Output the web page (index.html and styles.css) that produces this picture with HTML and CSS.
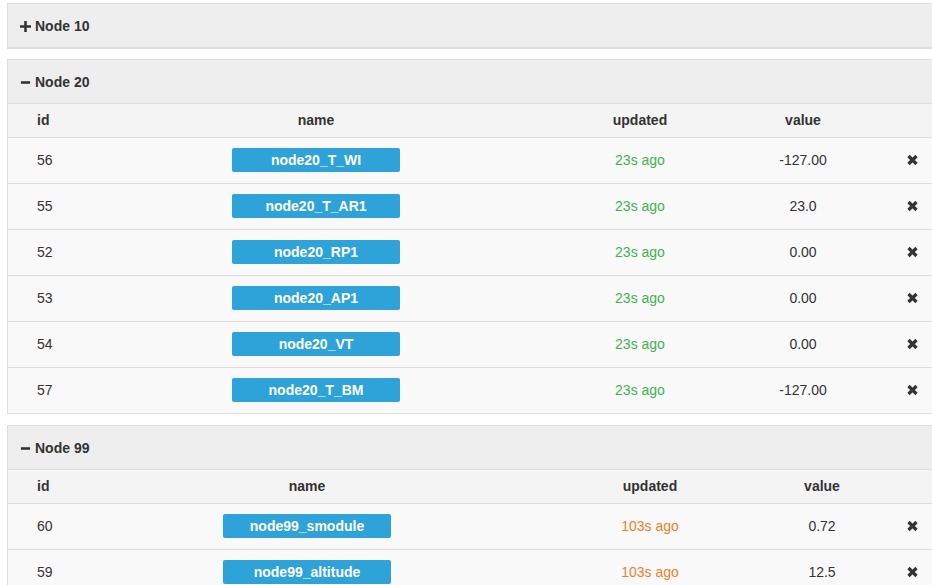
FILE: index.html
```html
<!DOCTYPE html>
<html>
<head>
<meta charset="utf-8">
<title>Nodes</title>
<link rel="stylesheet" href="styles.css">
</head>
<body>
<div class="page">

  <section class="panel">
    <div class="panel-heading">
      <svg class="toggle" viewBox="0 0 12 12" width="12" height="12"><path d="M0 6H12M6 0V12" stroke="#333" stroke-width="2.8"/></svg>
      <span>Node 10</span>
    </div>
  </section>

  <section class="panel panel-open">
    <div class="panel-heading">
      <svg class="toggle" viewBox="0 0 12 12" width="12" height="12"><path d="M1 6H11" stroke="#333" stroke-width="2.8"/></svg>
      <span>Node 20</span>
    </div>
    <table class="sensors t20">
      <colgroup><col class="c-id"><col class="c-name"><col class="c-upd"><col class="c-val"><col class="c-del"><col></colgroup>
      <thead>
        <tr><th class="id">id</th><th>name</th><th>updated</th><th>value</th><th></th><th></th></tr>
      </thead>
      <tbody>
        <tr><td class="id">56</td><td><span class="btn">node20_T_WI</span></td><td class="fresh">23s ago</td><td>-127.00</td><td><svg class="del" viewBox="0 0 12 12" width="12" height="12"><path d="M2 2L10 10M10 2L2 10" stroke="#333" stroke-width="3.2"/></svg></td><td></td></tr>
        <tr><td class="id">55</td><td><span class="btn">node20_T_AR1</span></td><td class="fresh">23s ago</td><td>23.0</td><td><svg class="del" viewBox="0 0 12 12" width="12" height="12"><path d="M2 2L10 10M10 2L2 10" stroke="#333" stroke-width="3.2"/></svg></td><td></td></tr>
        <tr><td class="id">52</td><td><span class="btn">node20_RP1</span></td><td class="fresh">23s ago</td><td>0.00</td><td><svg class="del" viewBox="0 0 12 12" width="12" height="12"><path d="M2 2L10 10M10 2L2 10" stroke="#333" stroke-width="3.2"/></svg></td><td></td></tr>
        <tr><td class="id">53</td><td><span class="btn">node20_AP1</span></td><td class="fresh">23s ago</td><td>0.00</td><td><svg class="del" viewBox="0 0 12 12" width="12" height="12"><path d="M2 2L10 10M10 2L2 10" stroke="#333" stroke-width="3.2"/></svg></td><td></td></tr>
        <tr><td class="id">54</td><td><span class="btn">node20_VT</span></td><td class="fresh">23s ago</td><td>0.00</td><td><svg class="del" viewBox="0 0 12 12" width="12" height="12"><path d="M2 2L10 10M10 2L2 10" stroke="#333" stroke-width="3.2"/></svg></td><td></td></tr>
        <tr><td class="id">57</td><td><span class="btn">node20_T_BM</span></td><td class="fresh">23s ago</td><td>-127.00</td><td><svg class="del" viewBox="0 0 12 12" width="12" height="12"><path d="M2 2L10 10M10 2L2 10" stroke="#333" stroke-width="3.2"/></svg></td><td></td></tr>
      </tbody>
    </table>
  </section>

  <section class="panel panel-open">
    <div class="panel-heading">
      <svg class="toggle" viewBox="0 0 12 12" width="12" height="12"><path d="M1 6H11" stroke="#333" stroke-width="2.8"/></svg>
      <span>Node 99</span>
    </div>
    <table class="sensors t99">
      <colgroup><col class="c-id"><col class="c-name"><col class="c-upd"><col class="c-val"><col class="c-del"><col></colgroup>
      <thead>
        <tr><th class="id">id</th><th>name</th><th>updated</th><th>value</th><th></th><th></th></tr>
      </thead>
      <tbody>
        <tr><td class="id">60</td><td><span class="btn">node99_smodule</span></td><td class="stale">103s ago</td><td>0.72</td><td><svg class="del" viewBox="0 0 12 12" width="12" height="12"><path d="M2 2L10 10M10 2L2 10" stroke="#333" stroke-width="3.2"/></svg></td><td></td></tr>
        <tr><td class="id">59</td><td><span class="btn">node99_altitude</span></td><td class="stale">103s ago</td><td>12.5</td><td><svg class="del" viewBox="0 0 12 12" width="12" height="12"><path d="M2 2L10 10M10 2L2 10" stroke="#333" stroke-width="3.2"/></svg></td><td></td></tr>
      </tbody>
    </table>
  </section>

</div>
</body>
</html>
```

FILE: styles.css
```css
html, body {
  margin: 0;
  padding: 0;
  overflow: hidden;
  background: #fff;
}

body {
  font-family: "Liberation Sans", Arial, sans-serif;
  font-size: 14px;
  line-height: 20px;
  color: #333;
}

.page {
  width: 1000px;
  padding: 3px 0 0 7px;
}

.panel {
  border: 1px solid #dddddd;
  margin-bottom: 10px;
  background: #fff;
}

.panel-open {
  margin-bottom: 11px;
}

.panel-heading {
  display: flex;
  align-items: center;
  gap: 4px;
  padding: 12px 12px 11px 12px;
  background: #eeeeee;
  border-bottom: 1px solid #dddddd;
  font-weight: bold;
  color: #333;
}

.toggle {
  display: block;
  width: 11px;
  height: 11px;
}

.sensors {
  width: 100%;
  border-collapse: collapse;
  table-layout: fixed;
}

.c-id { width: 52px; }
.c-del { width: 28px; }

.t20 .c-name { width: 512px; }
.t20 .c-upd { width: 136px; }
.t20 .c-val { width: 190px; }

.t99 .c-name { width: 494px; }
.t99 .c-upd { width: 192px; }
.t99 .c-val { width: 152px; }

.sensors th,
.sensors td {
  padding: 0;
  text-align: center;
  white-space: nowrap;
  overflow: visible;
}

.sensors thead tr {
  height: 33px;
  background: #f4f4f4;
}

.sensors th {
  font-weight: bold;
  color: #333;
}

.sensors tbody tr {
  height: 46px;
  border-top: 1px solid #dddddd;
  background: #f9f9f9;
}

.sensors .id {
  text-align: left;
  padding-left: 29px;
}

.btn {
  display: inline-block;
  width: 168px;
  height: 24px;
  line-height: 24px;
  background: #2ea3da;
  color: #fff;
  font-weight: bold;
  border-radius: 2px;
  vertical-align: middle;
}

.fresh { color: #3fb34f; }
.stale { color: #ef7e2e; }

.del {
  display: inline-block;
  width: 13px;
  height: 12px;
  vertical-align: -1px;
}
```
